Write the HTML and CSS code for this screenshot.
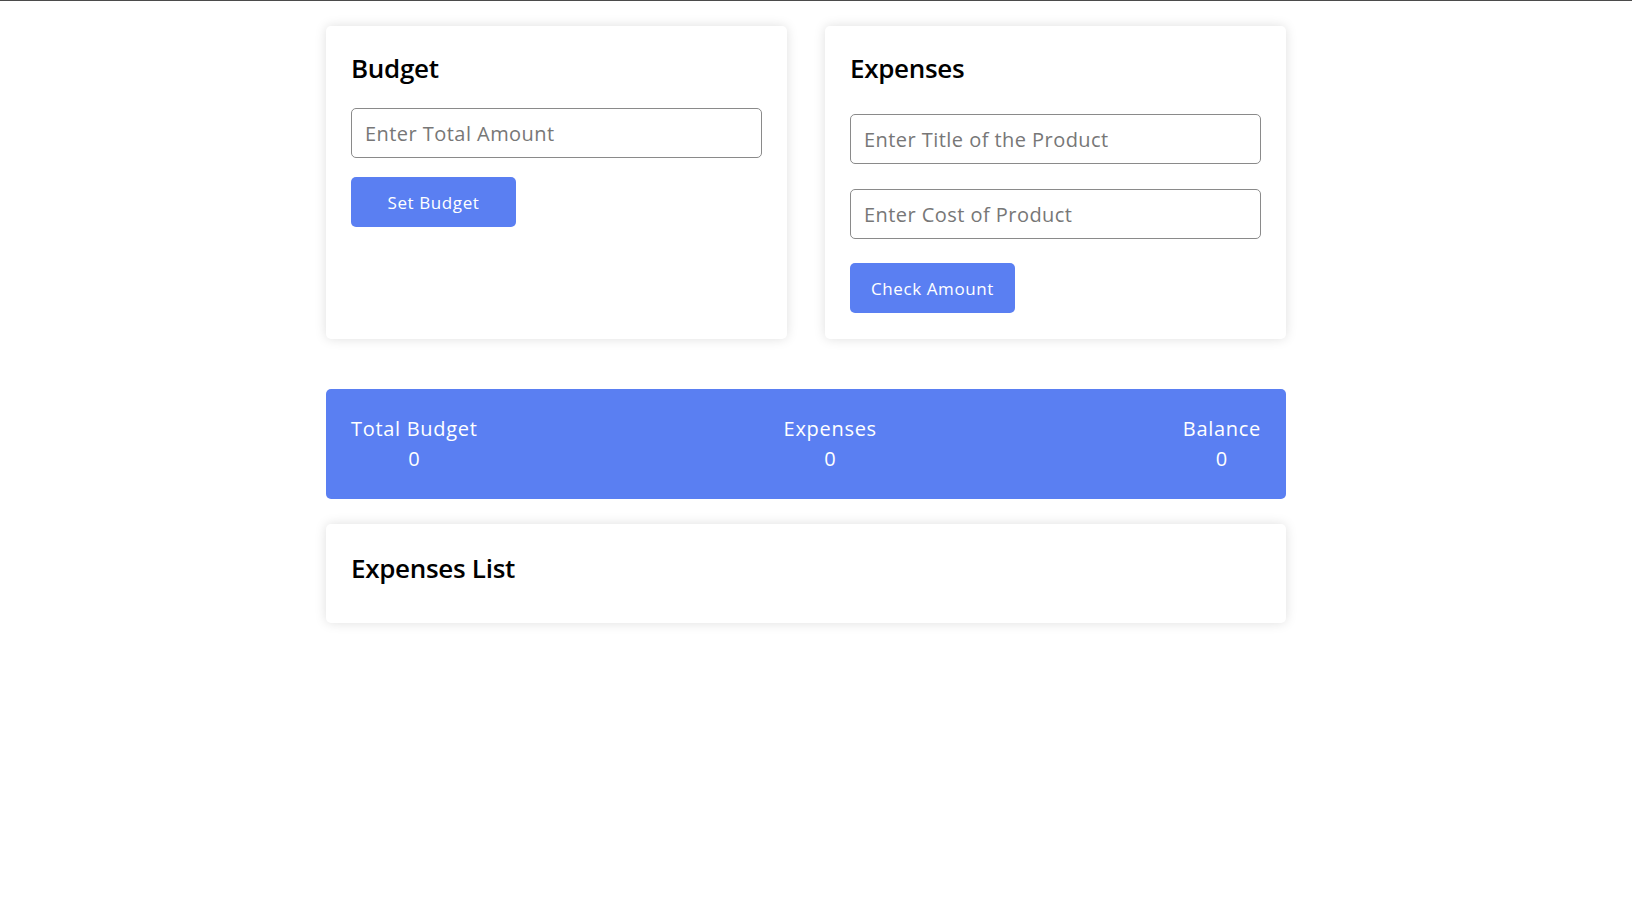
FILE: index.html
```html
<!DOCTYPE html>
<html lang="en">
<head>
<meta charset="utf-8">
<title>Budget App</title>
<link rel="stylesheet" href="styles.css">
</head>
<body>
<div class="app">
  <div class="top-row">
    <section class="card budget-card">
      <h2 class="card-title budget-title">Budget</h2>
      <input class="field" type="text" placeholder="Enter Total Amount">
      <button class="btn btn-budget">Set Budget</button>
    </section>
    <section class="card expenses-card">
      <h2 class="card-title expenses-title">Expenses</h2>
      <input class="field" type="text" placeholder="Enter Title of the Product">
      <input class="field field-gap" type="text" placeholder="Enter Cost of Product">
      <button class="btn btn-check">Check Amount</button>
    </section>
  </div>
  <div class="summary">
    <div class="stat"><p class="stat-label">Total Budget</p><p class="stat-value">0</p></div>
    <div class="stat"><p class="stat-label">Expenses</p><p class="stat-value">0</p></div>
    <div class="stat"><p class="stat-label">Balance</p><p class="stat-value">0</p></div>
  </div>
  <section class="card list-card">
    <h2 class="card-title list-title">Expenses List</h2>
  </section>
</div>
</body>
</html>
```
FILE: styles.css
```css
* { box-sizing: border-box; }
html, body { margin: 0; padding: 0; background: #fff; }
body {
  border-top: 1px solid #4b4b4b;
  font-family: "Open Sans", "Noto Sans", sans-serif;
  color: #000;
  min-height: 918px;
}
.app {
  width: 960px;
  margin: 25px 0 0 326px;
}
.top-row {
  display: grid;
  grid-template-columns: 1fr 1fr;
  gap: 38px;
}
.card {
  background: #fff;
  border-radius: 5px;
  box-shadow: 0 0 12px rgba(0, 0, 0, 0.13);
  padding: 25px;
  display: flex;
  flex-direction: column;
  align-items: flex-start;
}
.top-row .card { padding-bottom: 26px; }
.card-title {
  margin: 0;
  font-size: 26px;
  font-weight: 600;
  line-height: 35px;
  letter-spacing: -0.3px;
  color: #000;
}
.budget-title { margin-bottom: 22px; }
.expenses-title { margin-bottom: 28px; }
.field {
  width: 100%;
  height: 50px;
  border: 1px solid #8a8a8a;
  border-radius: 5px;
  padding: 0 13px;
  font-family: inherit;
  font-size: 20px;
  letter-spacing: 0.45px;
  color: #333;
  background: #fff;
  outline: none;
}
.field::placeholder { color: #777; }
.field-gap { margin-top: 25px; }
.btn {
  width: 165px;
  height: 50px;
  border: none;
  border-radius: 5px;
  background: #5a7ff2;
  color: #fff;
  font-family: inherit;
  font-size: 17px;
  letter-spacing: 0.6px;
  cursor: pointer;
}
.btn-budget { margin-top: 19px; }
.btn-check { margin-top: 24px; }
.summary {
  margin-top: 50px;
  height: 110px;
  background: #5a7ff2;
  border-radius: 5px;
  padding: 0 25px;
  display: flex;
  justify-content: space-between;
  align-items: center;
  color: #fff;
}
.stat { text-align: center; }
.stat p { margin: 0; font-size: 20px; line-height: 28px; letter-spacing: 0.7px; }
.stat .stat-value { margin-top: 2px; }
.list-card {
  margin-top: 25px;
  height: 99px;
  padding-top: 27px;
}
```
